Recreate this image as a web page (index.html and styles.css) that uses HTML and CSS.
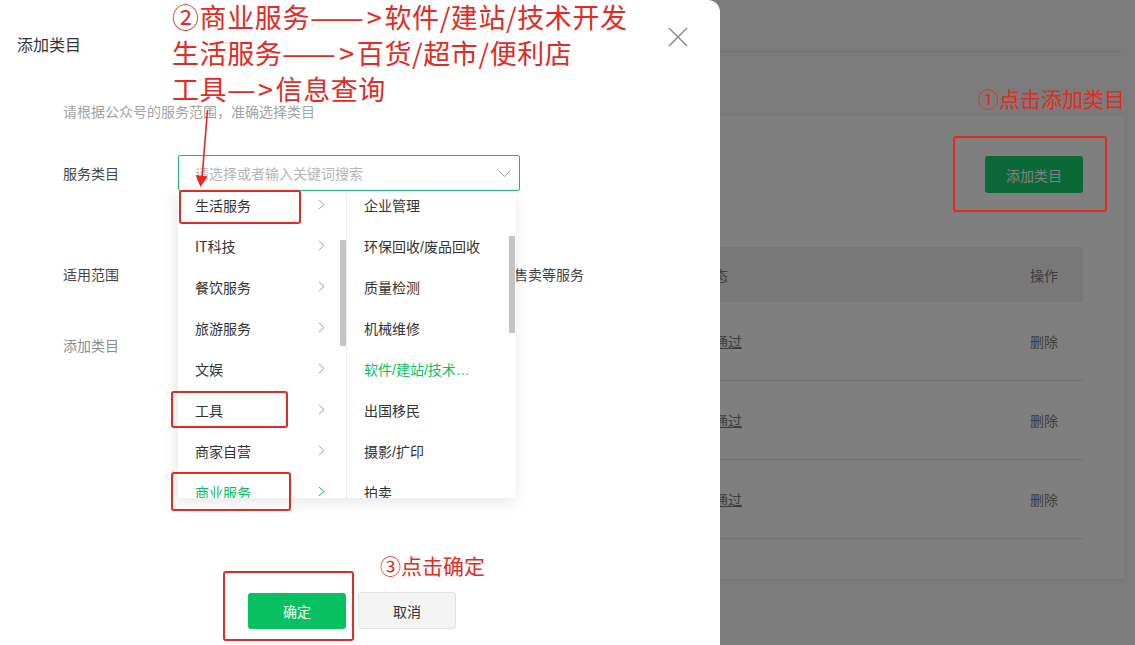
FILE: index.html
```html
<!DOCTYPE html>
<html lang="zh-CN">
<head>
<meta charset="utf-8">
<title>添加类目</title>
<link rel="stylesheet" href="styles.css">
</head>
<body>
<div class="app">
  <div class="topbar"></div>
  <div class="card">
    <div class="card-actions"><button class="btn-add">添加类目</button></div>
    <div class="table">
      <div class="tr th"><div></div><div>状态</div><div>操作</div></div>
      <div class="tr"><div></div><div><span class="link">已通过</span></div><div>删除</div></div>
      <div class="tr"><div></div><div><span class="link">已通过</span></div><div>删除</div></div>
      <div class="tr"><div></div><div><span class="link">已通过</span></div><div>删除</div></div>
    </div>
  </div>
</div>

<div class="mask"></div>

<div class="modal">
  <div class="modal-head">
    <div class="modal-title">添加类目</div>
    <svg class="close" width="20" height="20" viewBox="0 0 20 20"><path d="M1 1 L19 19 M19 1 L1 19" stroke="#8a8a8a" stroke-width="1.5" fill="none"/></svg>
  </div>
  <div class="modal-body">
    <div class="hint">请根据公众号的服务范围，准确选择类目</div>
    <div class="row row-select">
      <div class="label">服务类目</div>
      <div class="select">
        <span class="placeholder">请选择或者输入关键词搜索</span>
        <svg class="caret" width="13" height="8" viewBox="0 0 13 8"><path d="M1 1 L6.5 6.5 L12 1" stroke="#9a9a9a" stroke-width="1" fill="none"/></svg>
      </div>
    </div>
    <div class="row row-scope">
      <div class="label">适用范围</div>
      <div class="scope-text">本类目适用于为用户提供企业管理、技术开发及商品的售卖等服务</div>
    </div>
    <div class="row row-added">
      <div class="label muted">添加类目</div>
    </div>
  </div>
  <div class="modal-foot">
    <button class="btn btn-ok">确定</button>
    <button class="btn btn-cancel">取消</button>
  </div>

  <div class="dropdown">
    <div class="col col-left">
      <ul class="list">
        <li><span>生活服务</span><svg width="7" height="11" viewBox="0 0 7 11"><path d="M1 1 L6 5.5 L1 10" stroke="#a0a0a0" fill="none"/></svg></li>
        <li><span>IT科技</span><svg width="7" height="11" viewBox="0 0 7 11"><path d="M1 1 L6 5.5 L1 10" stroke="#a0a0a0" fill="none"/></svg></li>
        <li><span>餐饮服务</span><svg width="7" height="11" viewBox="0 0 7 11"><path d="M1 1 L6 5.5 L1 10" stroke="#a0a0a0" fill="none"/></svg></li>
        <li><span>旅游服务</span><svg width="7" height="11" viewBox="0 0 7 11"><path d="M1 1 L6 5.5 L1 10" stroke="#a0a0a0" fill="none"/></svg></li>
        <li><span>文娱</span><svg width="7" height="11" viewBox="0 0 7 11"><path d="M1 1 L6 5.5 L1 10" stroke="#a0a0a0" fill="none"/></svg></li>
        <li><span>工具</span><svg width="7" height="11" viewBox="0 0 7 11"><path d="M1 1 L6 5.5 L1 10" stroke="#a0a0a0" fill="none"/></svg></li>
        <li><span>商家自营</span><svg width="7" height="11" viewBox="0 0 7 11"><path d="M1 1 L6 5.5 L1 10" stroke="#a0a0a0" fill="none"/></svg></li>
        <li class="active"><span>商业服务</span><svg width="7" height="11" viewBox="0 0 7 11"><path d="M1 1 L6 5.5 L1 10" stroke="#07c160" fill="none"/></svg></li>
      </ul>
      <div class="scrollbar sb-left"></div>
    </div>
    <div class="col col-right">
      <ul class="list">
        <li><span>企业管理</span></li>
        <li><span>环保回收/废品回收</span></li>
        <li><span>质量检测</span></li>
        <li><span>机械维修</span></li>
        <li class="active"><span>软件/建站/技术开发</span></li>
        <li><span>出国移民</span></li>
        <li><span>摄影/扩印</span></li>
        <li><span>拍卖</span></li>
      </ul>
      <div class="scrollbar sb-right"></div>
    </div>
  </div>
</div>

<div class="note note-main">②商业服务<span class="dash dash-2">——</span><span class="gt">&gt;</span>软件/建站/技术开发<br>生活服务<span class="dash dash-2">——</span><span class="gt">&gt;</span>百货/超市/便利店<br>工具<span class="dash dash-1">—</span><span class="gt">&gt;</span>信息查询</div>
<div class="note note-small note-1">①点击添加类目</div>
<div class="note note-small note-3">③点击确定</div>

<div class="rbox rbox-1"></div>
<div class="rbox rbox-2"></div>
<div class="rbox rbox-3"></div>
<div class="rbox rbox-4"></div>
<div class="rbox rbox-5"></div>

<svg class="arrow" width="30" height="90" viewBox="190 105 30 90">
  <path d="M207.5 110 L202 178" stroke="#e42a22" stroke-width="1.6" fill="none"/>
  <path d="M195.5 175 L207.5 176.5 L200.5 187 Z" fill="#e42a22"/>
</svg>
</body>
</html>
```

FILE: styles.css
```css
* { box-sizing: border-box; }

html, body {
  margin: 0;
  padding: 0;
}

body {
  width: 1135px;
  height: 645px;
  overflow: hidden;
  position: relative;
  background: #f6f6f6;
  font-family: "Noto Sans CJK SC", "Noto Sans", sans-serif;
  font-size: 14px;
  color: #333;
}

ul { margin: 0; padding: 0; list-style: none; }
button { font-family: inherit; }

/* ---------- page behind the modal ---------- */
.app {
  height: 645px;
  padding: 0 11px 0 20px;
  display: flex;
  flex-direction: column;
}

.topbar {
  height: 52px;
  border-bottom: 1px solid #e6e6e6;
  flex: none;
}

.card {
  margin-top: 64px;
  height: 463px;
  background: #fff;
  padding: 40px 41px 0 40px;
  box-shadow: 0 1px 2px rgba(0,0,0,0.06);
  flex: none;
}

.card-actions {
  display: flex;
  justify-content: flex-end;
}

.btn-add {
  width: 98px;
  height: 37px;
  border: 0;
  border-radius: 3px;
  background: #15d36e;
  color: #fff;
  font-size: 14px;
}

.table {
  margin-top: 54px;
}

.tr {
  display: grid;
  grid-template-columns: 640px 330px 53px;
  align-items: center;
  height: 79px;
  border-bottom: 1px solid #e4e4e4;
  color: #7c7c7c;
}

.tr.th {
  height: 55px;
  background: #f1f1f1;
  border-bottom: 0;
}

.link { text-decoration: underline; }

/* ---------- mask ---------- */
.mask {
  position: absolute;
  inset: 0;
  background: rgba(0, 0, 0, 0.5);
}

/* ---------- modal ---------- */
.modal {
  position: absolute;
  left: 0;
  top: 0;
  width: 720px;
  height: 645px;
  background: #fff;
  border-top-right-radius: 12px;
  display: flex;
  flex-direction: column;
}

.modal-head {
  height: 90px;
  padding: 0 32px 0 17px;
  display: flex;
  justify-content: space-between;
  align-items: flex-start;
  flex: none;
}

.modal-title {
  margin-top: 34px;
  font-size: 16px;
  line-height: 20px;
  color: #333;
}

.close { margin-top: 27px; }

.modal-body {
  padding-left: 63px;
}

.hint {
  margin-top: 11px;
  line-height: 20px;
  color: #a3a3a3;
}

.row {
  display: flex;
  align-items: center;
}

.label {
  width: 115px;
  flex: none;
  color: #444;
  line-height: 20px;
}

.label.muted { color: #8c8c8c; }

.row-select { margin-top: 34px; }

.select {
  width: 342px;
  height: 36px;
  border: 1px solid #1fb77a;
  border-radius: 2px;
  display: flex;
  align-items: center;
  justify-content: space-between;
  padding: 0 8px 0 16px;
}

.placeholder { color: #b5b5b5; }

.caret { margin-top: 1px; }

.row-scope { margin-top: 73px; }

.scope-text {
  color: #444;
  line-height: 20px;
  white-space: nowrap;
}

.row-added { margin-top: 51px; }

.modal-foot {
  margin-top: auto;
  padding: 0 0 16px 248px;
  display: flex;
  gap: 12px;
  align-items: flex-end;
}

.btn {
  width: 98px;
  height: 36px;
  border-radius: 3px;
  font-size: 14px;
}

.btn-ok {
  background: #07c160;
  color: #fff;
  border: 0;
}

.btn-cancel {
  height: 37px;
  background: #f4f4f4;
  border: 1px solid #e2e2e2;
  color: #333;
}

/* ---------- cascader dropdown ---------- */
.dropdown {
  position: absolute;
  left: 178px;
  top: 191px;
  width: 338px;
  height: 307px;
  background: #fff;
  box-shadow: -2px 4px 14px rgba(0,0,0,0.10);
  display: flex;
}

.col {
  position: relative;
  overflow: hidden;
  height: 100%;
}

.col-left {
  width: 169px;
  border-right: 1px solid #ececec;
}

.col-right { width: 169px; }

.list { margin-top: -7px; }

.list li {
  height: 41px;
  display: flex;
  align-items: center;
  justify-content: space-between;
  color: #333;
  white-space: nowrap;
}

.col-left .list li { padding: 0 21px 0 17px; }

.col-right .list li { padding: 0 26px 0 17px; }

.col-right .list li span {
  font-family: "Liberation Sans", "Noto Sans CJK SC", sans-serif;
  overflow: hidden;
  text-overflow: ellipsis;
  max-width: 118px;
}

.list li.active { color: #07c160; }

.scrollbar {
  position: absolute;
  width: 6px;
  background: #c4c4c4;
}

.sb-left { right: 0; top: 49px; height: 106px; }
.sb-right { right: 1px; top: 45px; height: 97px; }

/* ---------- annotations ---------- */
.note {
  position: absolute;
  color: #e42a22;
  white-space: nowrap;
}

.note-main {
  left: 172px;
  top: -1px;
  font-size: 27px;
  line-height: 36px;
  letter-spacing: 0.6px;
}

.dash {
  display: inline-block;
  transform-origin: left center;
  transform: scaleX(1.19);
}

.dash-2 { margin-right: 10px; }
.dash-1 { margin-right: 5px; }

.gt { margin: 0 2px 0 1px; }

.note-small {
  font-size: 21px;
  line-height: 24px;
}

.note-1 { left: 978px; top: 86px; }
.note-3 { left: 380px; top: 553px; }

.rbox {
  position: absolute;
  border: 2px solid #e42a22;
  border-radius: 3px;
}

.rbox-1 { left: 179px; top: 190px; width: 122px; height: 34px; }
.rbox-2 { left: 171px; top: 391px; width: 117px; height: 37px; }
.rbox-3 { left: 171px; top: 472px; width: 120px; height: 39px; }
.rbox-4 { left: 223px; top: 571px; width: 131px; height: 70px; }
.rbox-5 { left: 953px; top: 136px; width: 154px; height: 76px; }

.arrow {
  position: absolute;
  left: 190px;
  top: 105px;
}
```
